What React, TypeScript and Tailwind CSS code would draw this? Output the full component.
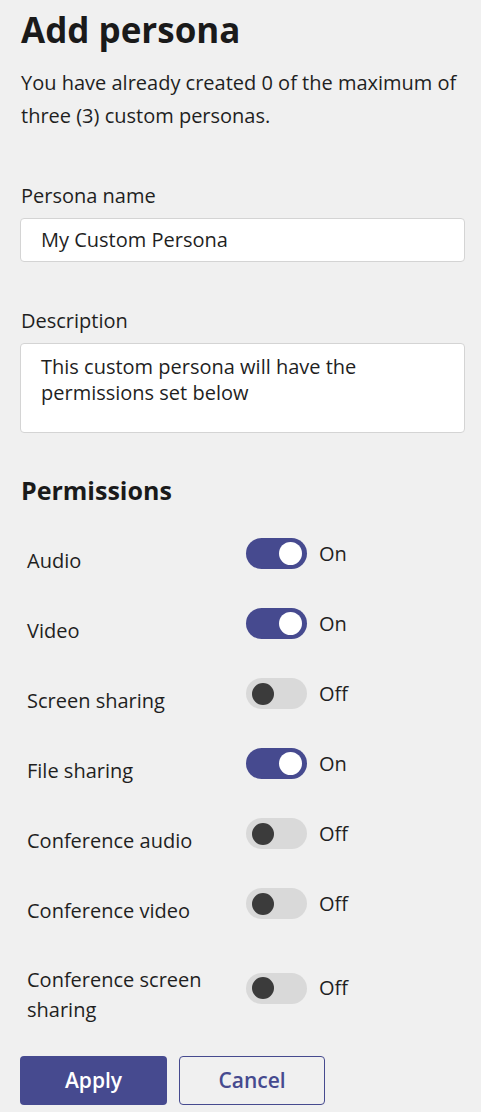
import React from "react";

const font = { fontFamily: '"Open Sans", "Noto Sans", sans-serif' };

function Toggle({ on }: { on: boolean }) {
  return (
    <div className="flex items-center pb-[14px]">
      {on ? (
        <div className="w-[61px] h-[31px] rounded-full bg-[#464a8f] flex items-center justify-end pr-[5px]">
          <div className="w-[23px] h-[23px] rounded-full bg-white" />
        </div>
      ) : (
        <div className="w-[61px] h-[31px] rounded-full bg-[#d9d9d9] flex items-center justify-start pl-[6px]">
          <div className="w-[22px] h-[22px] rounded-full bg-[#3b3b3b]" />
        </div>
      )}
      <span className="ml-[12px] text-[20px] leading-[30px] text-[#1f1f1f]">{on ? "On" : "Off"}</span>
    </div>
  );
}

const perms: { label: string; on: boolean }[] = [
  { label: "Audio", on: true },
  { label: "Video", on: true },
  { label: "Screen sharing", on: false },
  { label: "File sharing", on: true },
  { label: "Conference audio", on: false },
  { label: "Conference video", on: false },
];

export default function App() {
  return (
    <div className="min-h-screen bg-[#f0f0f0] pl-[20px] pr-[16px] pt-[10px] text-[#1f1f1f]" style={font}>
      <h1 className="pl-[1px] text-[35px] leading-[40px] font-bold text-[#1a1a1a]">Add persona</h1>
      <p className="mt-[16px] pl-[1px] text-[20px] leading-[33px]">
        You have already created 0 of the maximum of three (3) custom personas.
      </p>

      <div className="mt-[50px] pl-[1px] text-[20px] leading-[28px]">Persona name</div>
      <div className="mt-[8px] h-[44px] rounded-[4px] border border-[#d4d4d4] bg-white pl-[20px] flex items-center text-[20px]">
        My Custom Persona
      </div>

      <div className="mt-[45px] pl-[1px] text-[20px] leading-[28px]">Description</div>
      <div className="mt-[8px] h-[90px] rounded-[4px] border border-[#d4d4d4] bg-white pl-[20px] pr-[20px] pt-[10px] text-[20px] leading-[26px]">
        This custom persona will have the
        <br />
        permissions set below
      </div>

      <h2 className="mt-[41px] pl-[1px] text-[25px] leading-[32px] font-bold text-[#1a1a1a]">Permissions</h2>

      <div className="mt-[32px] flex flex-col gap-[25px] pl-[7px]">
        {perms.map((p) => (
          <div key={p.label} className="flex items-center">
            <div className="w-[219px] text-[20px] leading-[30px]">{p.label}</div>
            <Toggle on={p.on} />
          </div>
        ))}
        <div className="flex items-center mt-[7px]">
          <div className="w-[219px] pr-[20px] text-[20px] leading-[30px]">
            Conference screen
            <br />
            sharing
          </div>
          <Toggle on={false} />
        </div>
      </div>

      <div className="mt-[31px] flex gap-[12px]">
        <button className="w-[147px] h-[49px] rounded-[4px] bg-[#464a8f] text-white text-[21px] font-semibold">
          Apply
        </button>
        <button className="w-[146px] h-[49px] rounded-[4px] border-[1.5px] border-[#464a8f] bg-transparent text-[#464a8f] text-[21px] font-semibold">
          Cancel
        </button>
      </div>
    </div>
  );
}
